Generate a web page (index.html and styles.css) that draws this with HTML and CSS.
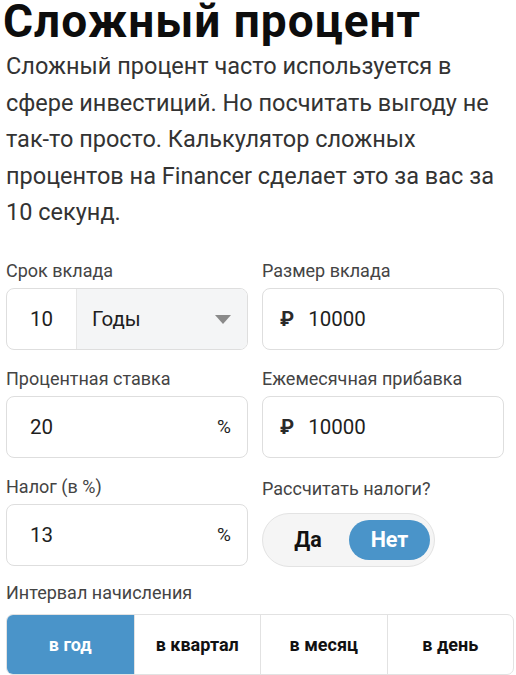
FILE: index.html
```html
<!DOCTYPE html>
<html lang="ru">
<head>
<meta charset="utf-8">
<link rel="stylesheet" href="styles.css">
</head>
<body>
<main class="page">
  <h1 class="title">Сложный процент</h1>
  <p class="intro">Сложный процент часто используется в<br>сфере инвестиций. Но посчитать выгоду не<br>так-то просто. Калькулятор сложных<br>процентов на Financer сделает это за вас за<br>10 секунд.</p>

  <div class="grid">
    <div class="field">
      <div class="label">Срок вклада</div>
      <div class="box split">
        <span class="num">10</span>
        <span class="select">Годы
          <svg class="caret" width="16" height="9" viewBox="0 0 16 9"><path d="M0 0H16L8 9Z" fill="#8a8a8a"/></svg>
        </span>
      </div>
    </div>
    <div class="field">
      <div class="label">Размер вклада</div>
      <div class="box"><span class="rub">₽</span><span class="val">10000</span></div>
    </div>

    <div class="field">
      <div class="label">Процентная ставка</div>
      <div class="box"><span class="val grow">20</span><span class="pct">%</span></div>
    </div>
    <div class="field">
      <div class="label">Ежемесячная прибавка</div>
      <div class="box"><span class="rub">₽</span><span class="val">10000</span></div>
    </div>

    <div class="field">
      <div class="label">Налог (в %)</div>
      <div class="box"><span class="val grow">13</span><span class="pct">%</span></div>
    </div>
    <div class="field">
      <div class="label label-alt">Рассчитать налоги?</div>
      <div class="toggle">
        <span class="opt">Да</span>
        <span class="opt on">Нет</span>
      </div>
    </div>
  </div>

  <div class="label interval-label">Интервал начисления</div>
  <div class="tabs">
    <span class="tab active">в год</span>
    <span class="tab">в квартал</span>
    <span class="tab">в месяц</span>
    <span class="tab">в день</span>
  </div>
</main>
</body>
</html>
```

FILE: styles.css
```css
* { box-sizing: border-box; }
html, body { margin: 0; padding: 0; background: #fff; }
body { font-family: Roboto, "Noto Sans", sans-serif; color: #222; }
.page { padding: 0 2px 0 6px; }

.title {
  margin: 0 0 0 -3px;
  font-size: 46px;
  line-height: 42px;
  letter-spacing: 1px;
  font-weight: 700;
  color: #0d0d0d;
  white-space: nowrap;
}
.intro {
  margin: 6px 0 0 0;
  font-size: 23.5px;
  line-height: 36.5px;
  color: #333;
  white-space: nowrap;
}

.grid {
  margin-top: 30px;
  display: grid;
  grid-template-columns: 242px 242px;
  column-gap: 14px;
  row-gap: 19px;
}
.label {
  font-size: 18px;
  line-height: 20px;
  color: #444;
  margin-bottom: 7px;
}
.label-alt { margin-top: 2px; margin-bottom: 14px; }

.box {
  height: 62px;
  border: 1px solid #dedede;
  border-radius: 8px;
  display: flex;
  align-items: center;
  padding: 0 16px 0 23px;
  font-size: 20.5px;
  color: #1e1e1e;
  overflow: hidden;
}
.split { padding: 0; }
.num {
  width: 69px;
  text-align: center;
  flex: none;
}
.select {
  flex: 1;
  align-self: stretch;
  display: flex;
  align-items: center;
  justify-content: space-between;
  background: #f4f5f6;
  border-left: 1px solid #e6e6e6;
  padding: 0 16px 0 15px;
}
.caret { display: block; margin-top: 2px; }
.rub {
  font-weight: 700;
  font-size: 20px;
  color: #2a2a2a;
  margin-left: -6px;
  margin-right: 14px;
}
.grow { flex: 1; }
.pct { font-size: 19px; }

.toggle {
  width: 173px;
  height: 54px;
  border: 1px solid #e3e3e3;
  background: #f5f5f5;
  border-radius: 27px;
  display: flex;
  align-items: center;
  padding: 0 4px 0 4px;
}
.opt {
  font-size: 21.5px;
  font-weight: 700;
  color: #111;
  flex: 1;
  text-align: center;
}
.opt.on {
  flex: none;
  width: 81px;
  height: 40px;
  line-height: 40px;
  border-radius: 20px;
  background: #4a94c9;
  color: #fff;
}

.interval-label { margin-top: 16px; margin-bottom: 11px; }
.tabs {
  display: grid;
  grid-template-columns: repeat(4, 1fr);
  width: 508px;
  height: 61px;
  border: 1px solid #e2e2e2;
  border-radius: 7px;
  overflow: hidden;
}
.tab {
  display: flex;
  align-items: center;
  justify-content: center;
  font-size: 18px;
  font-weight: 700;
  color: #111;
  border-left: 1px solid #e2e2e2;
}
.tab:first-child { border-left: none; }
.tab.active { background: #4a94c9; color: #fff; }
```
